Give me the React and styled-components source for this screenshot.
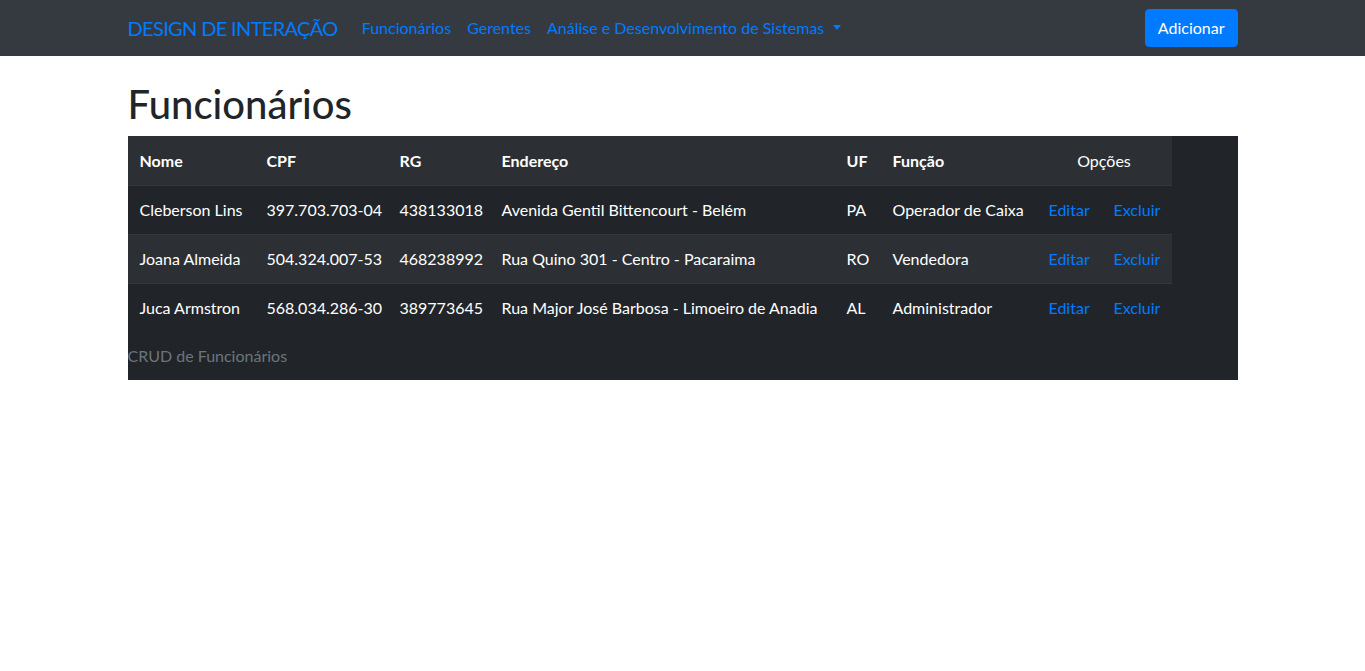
import React from "react";
import styled, { createGlobalStyle } from "styled-components";

const Global = createGlobalStyle`
  * { box-sizing: border-box; }
  body {
    margin: 0;
    font-family: "Segoe UI", Lato, "Liberation Sans", sans-serif;
    font-size: 16px;
    line-height: 1.5;
    color: #212529;
    background: #fff;
  }
`;

const NavBar = styled.nav`
  background: #343a40;
  height: 56px;
`;

const Container = styled.div`
  width: 1110px;
  margin: 0 auto;
`;

const NavInner = styled(Container)`
  height: 100%;
  display: flex;
  align-items: center;
`;

const Brand = styled.a`
  color: #007bff;
  font-size: 20px;
  line-height: 30px;
  letter-spacing: -0.65px;
  margin-right: 16px;
  text-decoration: none;
`;

const NavList = styled.ul`
  display: flex;
  list-style: none;
  margin: 0;
  padding: 0;
  flex: 1;
`;

const NavLink = styled.a`
  display: flex;
  align-items: center;
  color: #007bff;
  padding: 8px;
  text-decoration: none;
`;

const Caret = styled.span`
  display: inline-block;
  margin-left: 9px;
  border-top: 5px solid #007bff;
  border-left: 4.5px solid transparent;
  border-right: 4.5px solid transparent;
  transform: translateY(-1px);
`;

const Button = styled.button`
  background: #007bff;
  border: 1px solid #007bff;
  color: #fff;
  border-radius: 4px;
  font: inherit;
  padding: 6px 12px;
  line-height: 24px;
`;

const Title = styled.h1`
  font-size: 40px;
  font-weight: 500;
  line-height: 48px;
  margin: 24px 0 8px;
`;

const Panel = styled.div`
  background: #212529;
`;

const Table = styled.table`
  width: 1044px;
  border-collapse: collapse;
  color: #fff;
  table-layout: fixed;
  caption-side: bottom;
`;

const Caption = styled.caption`
  text-align: left;
  color: #6c757d;
  padding: 12px 0;
  line-height: 24px;
`;

const Row = styled.tr`
  background: ${(p) => (p.$striped ? "#2c3034" : "transparent")};
`;

const Cell = styled.td`
  padding: 12px;
  border-top: 1px solid ${(p) => (p.$first ? "#2c3034" : "#32383e")};
  line-height: 24px;
  white-space: nowrap;
  font-weight: ${(p) => (p.$head ? 700 : 400)};
  text-align: ${(p) => (p.$center ? "center" : "left")};
`;

const Action = styled.a`
  color: #007bff;
  text-decoration: none;
`;

const widths = [127, 133, 102, 345, 46, 156, 65, 70];

const rows = [
  ["Cleberson Lins", "397.703.703-04", "438133018", "Avenida Gentil Bittencourt - Belém", "PA", "Operador de Caixa"],
  ["Joana Almeida", "504.324.007-53", "468238992", "Rua Quino 301 - Centro - Pacaraima", "RO", "Vendedora"],
  ["Juca Armstron", "568.034.286-30", "389773645", "Rua Major José Barbosa - Limoeiro de Anadia", "AL", "Administrador"],
];

export default function App() {
  return (
    <>
      <Global />
      <NavBar>
        <NavInner>
          <Brand href="#">DESIGN DE INTERAÇÃO</Brand>
          <NavList>
            <li><NavLink href="#">Funcionários</NavLink></li>
            <li><NavLink href="#">Gerentes</NavLink></li>
            <li>
              <NavLink href="#">
                Análise e Desenvolvimento de Sistemas
                <Caret />
              </NavLink>
            </li>
          </NavList>
          <Button>Adicionar</Button>
        </NavInner>
      </NavBar>
      <Container>
        <Title>Funcionários</Title>
        <Panel>
          <Table>
            <colgroup>
              {widths.map((w, i) => (
                <col key={i} style={{ width: w }} />
              ))}
            </colgroup>
            <Caption>CRUD de Funcionários</Caption>
            <tbody>
              <Row $striped>
                {["Nome", "CPF", "RG", "Endereço", "UF", "Função"].map((h) => (
                  <Cell key={h} $head $first>{h}</Cell>
                ))}
                <Cell $first $center colSpan={2}>Opções</Cell>
              </Row>
              {rows.map((r, i) => (
                <Row key={i} $striped={i % 2 === 1}>
                  {r.map((c, j) => (
                    <Cell key={j}>{c}</Cell>
                  ))}
                  <Cell><Action href="#">Editar</Action></Cell>
                  <Cell><Action href="#">Excluir</Action></Cell>
                </Row>
              ))}
            </tbody>
          </Table>
        </Panel>
      </Container>
    </>
  );
}
